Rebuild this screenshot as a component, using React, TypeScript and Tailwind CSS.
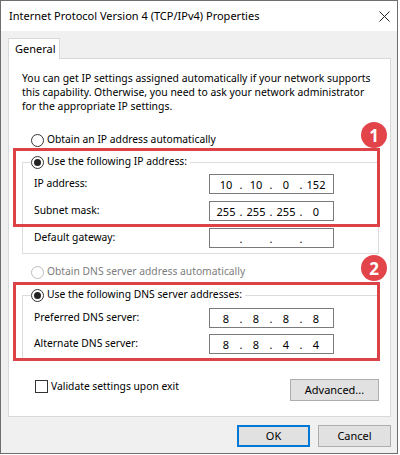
import React from "react";

const font = { fontFamily: '"Noto Sans", "Open Sans", Arial, sans-serif' };

function Radio({ checked, disabled }: { checked?: boolean; disabled?: boolean }) {
  return (
    <span
      className={`flex h-[13px] w-[13px] shrink-0 items-center justify-center rounded-full border bg-white ${
        disabled ? "border-[#bcbcbc]" : "border-[#333333]"
      }`}
    >
      {checked && <span className="h-[7px] w-[7px] rounded-full bg-[#222222]" />}
    </span>
  );
}

function IpField({ parts }: { parts: string[] }) {
  return (
    <div className="flex h-[20px] w-[125px] items-center border border-[#7a7a7a] bg-white pl-[3px] text-[11px] leading-none">
      {parts.map((p, i) => (
        <React.Fragment key={i}>
          <span className="w-[26px] text-center">{p}</span>
          {i < 3 && <span className="w-[4px] text-center">.</span>}
        </React.Fragment>
      ))}
    </div>
  );
}

function Row({ label, parts }: { label: string; parts: string[] }) {
  return (
    <div className="flex h-[20px] items-center justify-between pl-[11px] pr-[44px]">
      <span>{label}</span>
      <IpField parts={parts} />
    </div>
  );
}

function GroupLabel({ text }: { text: string }) {
  return (
    <div className="-mt-[9px] ml-[8px] flex h-[16px] w-fit items-center gap-[3px] bg-white pr-[3px]">
      <Radio checked />
      <span>{text}</span>
    </div>
  );
}

function Badge({ n, className }: { n: string; className: string }) {
  return (
    <div
      className={`absolute flex h-[26px] w-[26px] items-center justify-center rounded-full bg-[#e2444a] text-[17px] font-bold leading-none text-white ${className}`}
    >
      {n}
    </div>
  );
}

export default function App() {
  return (
    <div className="relative h-[455px] w-[400px] bg-white text-[10.3px] text-black" style={font}>
      <div className="flex h-[454px] w-[398px] flex-col border border-[#6e6e6e]">
        {/* title bar */}
        <div className="flex h-[30px] shrink-0 items-center justify-between bg-white pl-[8px] pr-[5px]">
          <span className="text-[11px]">Internet Protocol Version 4 (TCP/IPv4) Properties</span>
          <svg width="11" height="11" viewBox="0 0 11 11" className="mr-[2px]">
            <path d="M0.5 0.5 L10.5 10.5 M10.5 0.5 L0.5 10.5" stroke="#222" strokeWidth="1" fill="none" />
          </svg>
        </div>

        <div className="flex flex-1 flex-col bg-[#f0f0f0] pl-[7px] pr-[6px] pt-[7px]">
          {/* tab */}
          <div className="relative z-10 -mb-px flex h-[21px] w-[52px] items-center border border-b-0 border-[#d9d9d9] bg-white pl-[6px] text-[11px]">
            General
          </div>
          <div className="flex h-[359px] flex-col border border-[#d9d9d9] bg-white pl-[13px] pr-[10px] pt-[12px]">
            <p className="whitespace-nowrap text-[10.4px] leading-[14px]">
              You can get IP settings assigned automatically if your network supports
              <br />
              this capability. Otherwise, you need to ask your network administrator
              <br />
              for the appropriate IP settings.
            </p>

            <div className="ml-[9px] mt-[19px] flex h-[16px] items-center gap-[3px]">
              <Radio />
              <span>Obtain an IP address automatically</span>
            </div>

            {/* group 1 */}
            <div className="mt-[14px] flex w-[357px] flex-col border border-[#dcdcdc] pb-[5px]">
              <GroupLabel text="Use the following IP address:" />
              <div className="mt-[4px] flex flex-col gap-[7px]">
                <Row label="IP address:" parts={["10", "10", "0", "152"]} />
                <Row label="Subnet mask:" parts={["255", "255", "255", "0"]} />
                <Row label="Default gateway:" parts={["", "", "", ""]} />
              </div>
            </div>

            <div className="ml-[9px] mt-[10px] flex h-[16px] items-center gap-[3px] text-[#7d7d7d]">
              <Radio disabled />
              <span>Obtain DNS server address automatically</span>
            </div>

            {/* group 2 */}
            <div className="mt-[15px] flex w-[357px] flex-col border border-[#dcdcdc] pb-[5px]">
              <GroupLabel text="Use the following DNS server addresses:" />
              <div className="mt-[5px] flex flex-col gap-[6px]">
                <Row label="Preferred DNS server:" parts={["8", "8", "8", "8"]} />
                <Row label="Alternate DNS server:" parts={["8", "8", "4", "4"]} />
              </div>
            </div>

            <div className="mt-[19px] flex w-[357px] items-start justify-between">
              <div className="ml-[13px] mt-[1px] flex h-[13px] items-center gap-[3px]">
                <span className="h-[13px] w-[13px] border border-[#333333] bg-white" />
                <span>Validate settings upon exit</span>
              </div>
              <button className="h-[22px] w-[89px] border border-[#adadad] bg-[#e1e1e1] text-[11px]">Advanced...</button>
            </div>
          </div>

          {/* footer */}
          <div className="mt-[8px] flex justify-end gap-[8px] text-[11px]">
            <button className="h-[22px] w-[73px] border-2 border-[#0078d7] bg-[#e1e1e1]">OK</button>
            <button className="h-[22px] w-[73px] border border-[#adadad] bg-[#e1e1e1]">Cancel</button>
          </div>
        </div>
      </div>

      {/* annotations */}
      <div className="absolute left-[13px] top-[148px] h-[79px] w-[367px] border-[3px] border-[#dc4349]" />
      <div className="absolute left-[13px] top-[282px] h-[79px] w-[367px] border-[3px] border-[#dc4349]" />
      <Badge n="1" className="left-[361px] top-[122px]" />
      <Badge n="2" className="left-[361px] top-[255px]" />
    </div>
  );
}
